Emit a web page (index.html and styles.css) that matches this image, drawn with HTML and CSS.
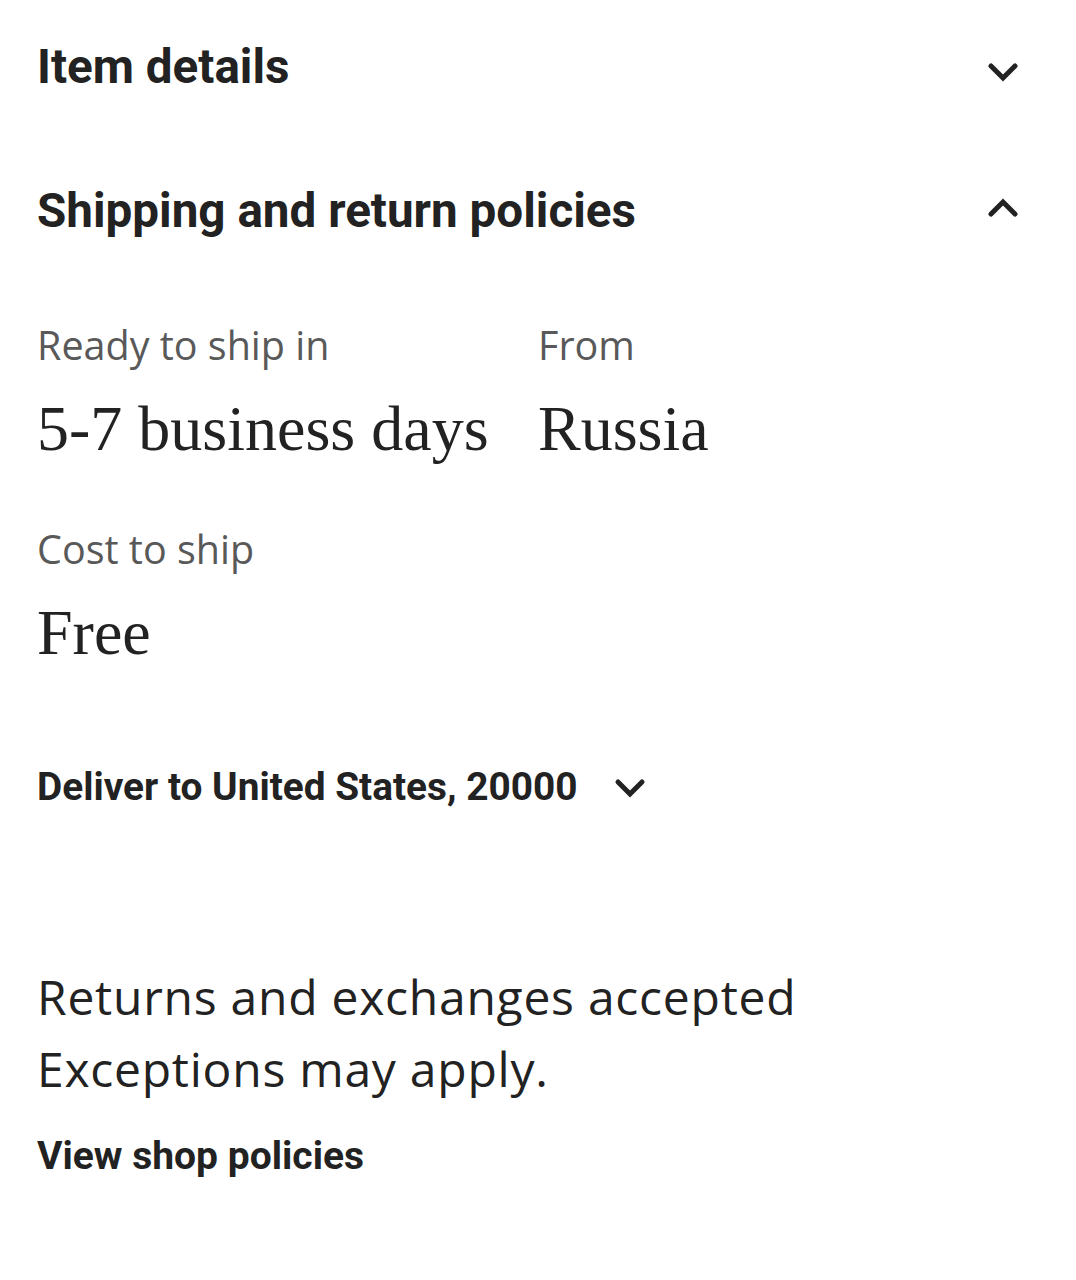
FILE: index.html
```html
<!DOCTYPE html>
<html lang="en">
<head>
<meta charset="utf-8">
<title>Shipping and return policies</title>
<link rel="stylesheet" href="styles.css">
</head>
<body>
<main class="page">
  <section class="acc">
    <div class="acc-header acc-first">
      <h2 class="acc-title">Item details</h2>
      <svg class="chev chev-down" viewBox="0 0 32 20" aria-hidden="true"><path d="M4 4 L16 16 L28 4"/></svg>
    </div>
  </section>
  <section class="acc">
    <div class="acc-header acc-second">
      <h2 class="acc-title">Shipping and return policies</h2>
      <svg class="chev chev-up" viewBox="0 0 32 20" aria-hidden="true"><path d="M4 16 L16 4 L28 16"/></svg>
    </div>
    <div class="ship-grid">
      <div class="ship-cell">
        <div class="ship-label">Ready to ship in</div>
        <div class="ship-value">5-7 business days</div>
      </div>
      <div class="ship-cell">
        <div class="ship-label">From</div>
        <div class="ship-value">Russia</div>
      </div>
      <div class="ship-cell ship-cost">
        <div class="ship-label">Cost to ship</div>
        <div class="ship-value">Free</div>
      </div>
    </div>
    <div class="deliver">
      <span class="deliver-text">Deliver to United States, 20000</span>
      <svg class="chev chev-small" viewBox="0 0 32 20" aria-hidden="true"><path d="M4 4 L16 16 L28 4"/></svg>
    </div>
    <div class="returns">
      <p class="returns-line">Returns and exchanges accepted</p>
      <p class="returns-line">Exceptions may apply.</p>
    </div>
    <a class="policies-link" href="#">View shop policies</a>
  </section>
</main>
</body>
</html>
```
FILE: styles.css
```css
html, body {
  margin: 0;
  padding: 0;
  background: #ffffff;
}
body {
  color: #222222;
  font-family: Roboto, "Liberation Sans", sans-serif;
}
.page {
  padding: 0 37px 0 37px;
}
.acc-header {
  display: flex;
  justify-content: space-between;
  align-items: flex-start;
}
.acc-first {
  padding-top: 39px;
}
.acc-second {
  padding-top: 88px;
}
.acc-title {
  margin: 0;
  font-size: 47.6px;
  line-height: 56px;
  font-weight: 700;
  color: #222222;
}
.chev {
  fill: none;
  stroke: #222222;
  stroke-width: 5;
  stroke-linecap: round;
  stroke-linejoin: miter;
}
.chev-down {
  width: 32px;
  height: 20px;
  margin-top: 23px;
  margin-right: 20px;
}
.chev-up {
  width: 32px;
  height: 20px;
  margin-top: 15px;
  margin-right: 20px;
}
.ship-grid {
  display: grid;
  grid-template-columns: 501px 1fr;
  row-gap: 62px;
  padding-top: 84px;
}
.ship-label {
  font-family: "Open Sans", sans-serif;
  font-size: 39.5px;
  line-height: 44px;
  color: #595959;
}
.ship-value {
  font-family: "Liberation Serif", serif;
  font-size: 64px;
  line-height: 72px;
  color: #222222;
  margin-top: 26px;
}
.deliver {
  display: flex;
  align-items: center;
  gap: 36px;
  padding-top: 94px;
}
.deliver-text {
  font-size: 38.8px;
  line-height: 48px;
  font-weight: 700;
  color: #222222;
}
.chev-small {
  width: 32px;
  height: 20px;
  margin-top: 2px;
}
.returns {
  padding-top: 150px;
}
.returns-line {
  margin: 0;
  font-family: "Open Sans", sans-serif;
  font-size: 48px;
  line-height: 72px;
  font-weight: 400;
  letter-spacing: 0.75px;
  color: #222222;
}
.policies-link {
  display: block;
  margin-top: 27px;
  font-size: 39px;
  line-height: 48px;
  font-weight: 700;
  color: #222222;
  text-decoration: none;
}
```
